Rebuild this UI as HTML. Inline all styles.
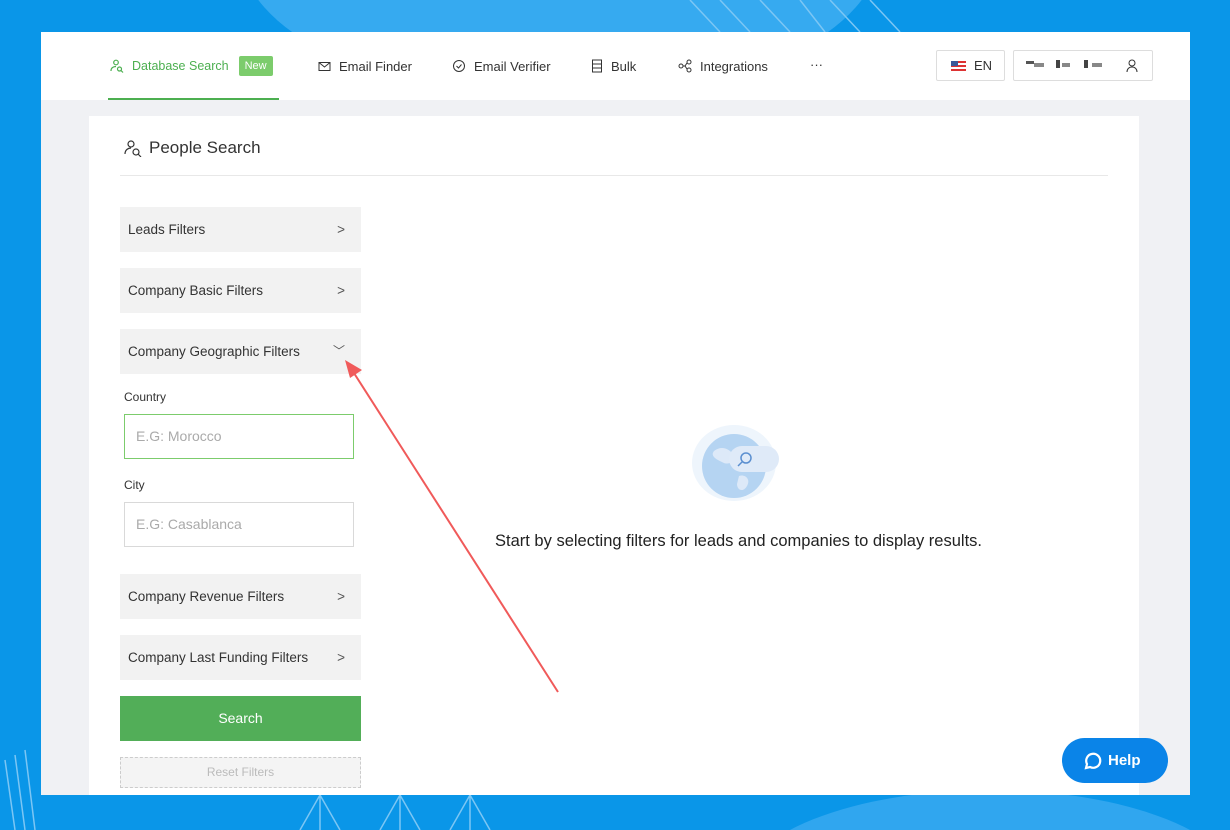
<!DOCTYPE html>
<html style="width:1230px;height:830px;overflow:hidden"><head><meta charset="utf-8"><style>
*{box-sizing:border-box;margin:0;padding:0}
body{width:1230px;height:830px;overflow:hidden;background:#0a96e8;font-family:"Liberation Sans",sans-serif;position:relative}
.bg{position:absolute;left:0;top:0;width:1230px;height:830px;overflow:hidden}
.blob{position:absolute;border-radius:50%}
.card{position:absolute;left:41px;top:32px;width:1149px;height:763px;background:#f0f1f4}
.hdr{position:absolute;left:0;top:0;width:1149px;height:68px;background:#fff}
.nav{position:absolute;top:26px;font-size:13px;color:#333;display:flex;align-items:center;gap:8px;height:16px}
.panel{position:absolute;left:48px;top:84px;width:1050px;height:679px;background:#fff}
.acc{position:absolute;left:31px;width:241px;height:45px;background:#f2f2f2;font-size:13.5px;color:#333;padding:0 0 0 8px;line-height:45px}
.acc span{position:absolute;right:16px;top:0;color:#555}
.lbl{position:absolute;left:35px;font-size:12px;color:#333}
.inp{position:absolute;left:35px;width:230px;height:45px;border:1px solid #d9d9d9;font-size:14px;color:#aaa;padding-left:11px;line-height:43px;background:#fff}
</style></head><body>
<div class="bg">
<div class="blob" style="left:240px;top:-200px;width:640px;height:300px;background:#36aaf0;border-radius:0 0 50% 50%"></div>
<div class="blob" style="left:740px;top:790px;width:500px;height:200px;background:#30a6ef"></div>
<svg style="position:absolute;left:0;top:0" width="1230" height="830">
<g stroke="#7cc6f4" stroke-width="1.5" fill="none">
<path d="M690 0 L720 32 M720 0 L750 32 M760 0 L790 32 M800 0 L825 32 M830 0 L860 32 M870 0 L900 32"/>
<path d="M320 795 L300 830 M320 795 L340 830 M320 795 V830 M400 795 L380 830 M400 795 L420 830 M400 795 V830 M470 795 L450 830 M470 795 L490 830 M470 795 V830"/>
<path d="M5 760 L15 830 M15 755 L25 830 M25 750 L35 830"/>
</g></svg>
</div>
<div class="card">
<div class="hdr">
<div class="nav" style="left:69px;color:#4caf50;font-size:12.5px"><svg width="14" height="14" viewBox="0 0 14 14" fill="none" stroke="#4caf50" stroke-width="1.2"><circle cx="6" cy="3.5" r="2.3"/><path d="M1 12c0-3 2-4.5 5-4.5"/><circle cx="9.5" cy="10" r="2"/><path d="M11 11.5l2 2"/></svg>Database Search<span style="background:#7ccc6c;color:#fff;font-size:11px;padding:4px 6px;border-radius:2px;margin-left:2px">New</span></div>
<div style="position:absolute;left:67px;top:66px;width:171px;height:2px;background:#4caf50"></div>
<div class="nav" style="left:277px"><svg width="13" height="13" viewBox="0 0 13 13" fill="none" stroke="#333"><rect x="1" y="2.5" width="11" height="8"/><path d="M1 2.5l5.5 4.5 5.5-4.5"/></svg>Email Finder</div>
<div class="nav" style="left:411px"><svg width="14" height="14" viewBox="0 0 14 14" fill="none" stroke="#333"><circle cx="7" cy="7" r="5.5"/><path d="M4.5 7l2 2 3-3.5"/></svg>Email Verifier</div>
<div class="nav" style="left:550px"><svg width="12" height="14" viewBox="0 0 12 14" fill="none" stroke="#333"><rect x="1.5" y="1" width="9" height="12"/><path d="M1.5 5h9M1.5 9h9"/></svg>Bulk</div>
<div class="nav" style="left:637px"><svg width="14" height="14" viewBox="0 0 14 14" fill="none" stroke="#333"><circle cx="3" cy="7" r="2"/><circle cx="11" cy="3" r="2"/><circle cx="11" cy="11" r="2"/><path d="M5 7h2M7 7l2-3M7 7l2 3"/></svg>Integrations</div>
<div class="nav" style="left:769px;top:24px">···</div>
<div style="position:absolute;left:895px;top:18px;width:69px;height:31px;border:1px solid #ddd;border-radius:2px;font-size:13px;color:#333;line-height:29px;padding-left:14px"><span style="display:inline-block;width:15px;height:10px;background:repeating-linear-gradient(#d33 0 2px,#fff 2px 4px);position:relative;vertical-align:-1px;margin-right:8px"><span style="position:absolute;left:0;top:0;width:7px;height:5px;background:#3b5998"></span></span>EN</div>
<div style="position:absolute;left:972px;top:18px;width:140px;height:31px;border:1px solid #ddd;border-radius:2px;font-size:13px;color:#333;line-height:29px;padding-left:14px"><span style="position:absolute;left:12px;top:10px;width:8px;height:3px;background:#555"></span><span style="position:absolute;left:20px;top:12px;width:10px;height:4px;background:#888"></span><span style="position:absolute;left:42px;top:9px;width:4px;height:8px;background:#444"></span><span style="position:absolute;left:48px;top:12px;width:8px;height:4px;background:#888"></span><span style="position:absolute;left:70px;top:9px;width:4px;height:8px;background:#444"></span><span style="position:absolute;left:78px;top:12px;width:10px;height:4px;background:#888"></span><svg style="position:absolute;right:14px;top:8px" width="12" height="14" viewBox="0 0 12 14" fill="none" stroke="#333"><circle cx="6" cy="4" r="3"/><path d="M1 13c0-3 2-5 5-5s5 2 5 5"/></svg></div>
</div>
<div class="panel">
<div style="position:absolute;left:34px;top:22px;font-size:17px;color:#333;display:flex;align-items:center;gap:6px"><svg width="20" height="18" viewBox="0 0 20 18" fill="none" stroke="#333" stroke-width="1.2"><circle cx="8" cy="5" r="3"/><path d="M2 15c0-4 3-6 6-6"/><circle cx="13" cy="13" r="3"/><path d="M15 15l3 3"/></svg>People Search</div>
<div style="position:absolute;left:31px;top:59px;width:988px;height:1px;background:#e8e8e8"></div>
<div class="acc" style="top:91px">Leads Filters<span>&gt;</span></div>
<div class="acc" style="top:152px">Company Basic Filters<span>&gt;</span></div>
<div class="acc" style="top:213px">Company Geographic Filters<span style="font-size:12px">﹀</span></div>
<div class="lbl" style="top:274px">Country</div>
<div class="inp" style="top:298px;border-color:#7ccc6c">E.G: Morocco</div>
<div class="lbl" style="top:362px">City</div>
<div class="inp" style="top:386px">E.G: Casablanca</div>
<div class="acc" style="top:458px">Company Revenue Filters<span>&gt;</span></div>
<div class="acc" style="top:519px">Company Last Funding Filters<span>&gt;</span></div>
<div style="position:absolute;left:31px;top:580px;width:241px;height:45px;background:#52ae58;color:#fff;font-size:14px;text-align:center;line-height:45px">Search</div>
<div style="position:absolute;left:31px;top:641px;width:241px;height:31px;background:#f4f4f4;border:1px dashed #ccc;color:#bbb;font-size:12px;text-align:center;line-height:29px">Reset Filters</div>
<svg style="position:absolute;left:600px;top:305px" width="95" height="85" viewBox="0 0 95 85"><ellipse cx="45" cy="42" rx="42" ry="38" fill="#eef5fc"/><circle cx="45" cy="45" r="32" fill="#b5d4f2"/><path d="M25 30c8-6 15-2 20 4s-6 10-10 8-15-6-10-12z" fill="#dde9f8"/><path d="M50 55c6-2 12 3 8 10s-10 4-10-2z" fill="#dde9f8"/><rect x="40" y="25" width="50" height="26" rx="13" fill="#dfeaf8"/><circle cx="57" cy="37" r="5" fill="none" stroke="#5b8fd0" stroke-width="1.5"/><path d="M53 41l-4 4" stroke="#5b8fd0" stroke-width="1.5"/></svg>
<div style="position:absolute;left:406px;top:416px;font-size:16.5px;color:#222">Start by selecting filters for leads and companies to display results.</div>
</div>
<div style="position:absolute;left:1021px;top:706px;width:106px;height:45px;border-radius:23px;background:#0a84e8;color:#fff;font-weight:bold;font-size:15px;line-height:45px;padding-left:46px">Help<svg style="position:absolute;left:20px;top:13px" width="20" height="20" viewBox="0 0 20 20" fill="none" stroke="#fff" stroke-width="2.2"><path d="M4 17l1-4A7 7 0 1 1 8 16z"/></svg></div>
</div>
<svg style="position:absolute;left:0;top:0" width="1230" height="830"><path d="M558 692 L352 370" stroke="#f05a5a" stroke-width="2"/><path d="M345 360 L362 370 L350 378z" fill="#f05a5a"/></svg>
</body></html>
